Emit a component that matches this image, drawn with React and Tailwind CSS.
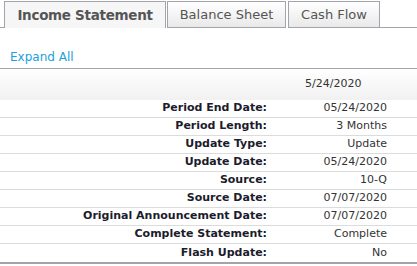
import React from "react";

const rows = [
  ["Period End Date:", "05/24/2020"],
  ["Period Length:", "3 Months"],
  ["Update Type:", "Update"],
  ["Update Date:", "05/24/2020"],
  ["Source:", "10-Q"],
  ["Source Date:", "07/07/2020"],
  ["Original Announcement Date:", "07/07/2020"],
  ["Complete Statement:", "Complete"],
  ["Flash Update:", "No"],
];

export default function App() {
  return (
    <div
      className="w-[417px] h-[266px] bg-white overflow-hidden"
      style={{ fontFamily: '"DejaVu Sans", Verdana, sans-serif' }}
    >
      {/* tabs */}
      <div className="flex items-end h-[28px] pt-[1px]">
        <div className="w-[4px] h-full border-b border-[#a3a3ab]" />
        <div className="w-[162px] h-full flex items-center justify-center border border-b-0 border-[#a3a3ab] bg-[#f6f6f6] text-[13.5px] font-bold text-[#555] tracking-[-0.3px]">
          Income Statement
        </div>
        <div className="ml-px w-[119px] h-full flex items-center justify-center border border-[#a3a3ab] bg-gradient-to-b from-white to-[#e9e9e9] text-[13px] text-[#555]">
          Balance Sheet
        </div>
        <div className="ml-[2px] w-[92px] h-full flex items-center justify-center border border-[#a3a3ab] bg-gradient-to-b from-white to-[#e9e9e9] text-[13px] text-[#555]">
          Cash Flow
        </div>
        <div className="flex-1 h-full border-b border-[#a3a3ab]" />
      </div>

      <div className="h-[41px] border-b border-[#a3a3ab] pl-[10px] pt-[16px]">
        <span className="text-[12px] text-[#1ba1db] leading-none">Expand All</span>
      </div>

      <div className="flex h-[31px] items-center bg-gradient-to-b from-white to-[#f1f1f1]">
        <div className="flex-1" />
        <div className="w-[150px] pl-[38px] text-[11px] text-[#333]">5/24/2020</div>
      </div>

      <div className="border-b-2 border-[#a3a3ab]">
        {rows.map(([k, v], i) => (
          <div
            key={k}
            className={
              "flex h-[18px] items-center text-[11px] " +
              (i < rows.length - 1 ? "border-b border-[#dcdcdc]" : "")
            }
          >
            <div className="flex-1 text-right font-bold text-[#1c1c2c] pr-[4px]">{k}</div>
            <div className="w-[146px] text-right pr-[30px] text-[#333]">{v}</div>
          </div>
        ))}
      </div>
    </div>
  );
}
